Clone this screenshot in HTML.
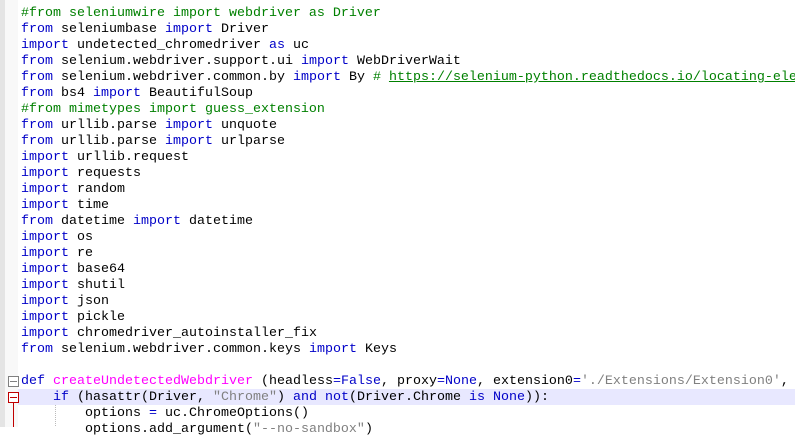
<!DOCTYPE html><html><head><style>
body{margin:0;width:795px;height:427px;overflow:hidden;background:#fff;position:relative;font-family:"Liberation Mono","Courier New",monospace;font-size:13.33px}
.g{position:absolute;left:0;top:0;width:5px;height:427px;background:#e4e4e4}
.f{position:absolute;left:5px;top:0;width:13px;height:427px;background:#f8f8f8}
.l{position:absolute;left:21px;right:0;overflow:hidden;height:16px;line-height:16px;white-space:pre;color:#000}
.k{color:#0000c8}.c{color:#008000}.s{color:#808080}.m{color:#ff00ff}
.u{color:#008000;text-decoration:underline}
.hl{position:absolute;left:18px;right:0;top:389px;height:16px;background:#e8e8ff}
</style></head><body>
<div class="g"></div><div class="f"></div>
<div class="hl"></div>
<div class="l" style="top:6px"><span class="c">#from seleniumwire import webdriver as Driver</span></div>
<div class="l" style="top:22px"><span class="k">from</span> seleniumbase <span class="k">import</span> Driver</div>
<div class="l" style="top:38px"><span class="k">import</span> undetected_chromedriver <span class="k">as</span> uc</div>
<div class="l" style="top:54px"><span class="k">from</span> selenium.webdriver.support.ui <span class="k">import</span> WebDriverWait</div>
<div class="l" style="top:70px"><span class="k">from</span> selenium.webdriver.common.by <span class="k">import</span> By <span class="c"># </span><span class="u">https://selenium-python.readthedocs.io/locating-elements.html</span></div>
<div class="l" style="top:86px"><span class="k">from</span> bs4 <span class="k">import</span> BeautifulSoup</div>
<div class="l" style="top:102px"><span class="c">#from mimetypes import guess_extension</span></div>
<div class="l" style="top:118px"><span class="k">from</span> urllib.parse <span class="k">import</span> unquote</div>
<div class="l" style="top:134px"><span class="k">from</span> urllib.parse <span class="k">import</span> urlparse</div>
<div class="l" style="top:150px"><span class="k">import</span> urllib.request</div>
<div class="l" style="top:166px"><span class="k">import</span> requests</div>
<div class="l" style="top:182px"><span class="k">import</span> random</div>
<div class="l" style="top:198px"><span class="k">import</span> time</div>
<div class="l" style="top:214px"><span class="k">from</span> datetime <span class="k">import</span> datetime</div>
<div class="l" style="top:230px"><span class="k">import</span> os</div>
<div class="l" style="top:246px"><span class="k">import</span> re</div>
<div class="l" style="top:262px"><span class="k">import</span> base64</div>
<div class="l" style="top:278px"><span class="k">import</span> shutil</div>
<div class="l" style="top:294px"><span class="k">import</span> json</div>
<div class="l" style="top:310px"><span class="k">import</span> pickle</div>
<div class="l" style="top:326px"><span class="k">import</span> chromedriver_autoinstaller_fix</div>
<div class="l" style="top:342px"><span class="k">from</span> selenium.webdriver.common.keys <span class="k">import</span> Keys</div>
<div class="l" style="top:374px"><span class="k">def</span> <span class="m">createUndetectedWebdriver</span> (headless<span class="k">=False</span>, proxy<span class="k">=None</span>, extension0<span class="k">=</span><span class="s">'./Extensions/Extension0'</span>, </div>
<div class="l" style="top:390px">    <span class="k">if</span> (hasattr(Driver, <span class="s">"Chrome"</span>) <span class="k">and</span> <span class="k">not</span>(Driver.Chrome <span class="k">is</span> <span class="k">None</span>)):</div>
<div class="l" style="top:406px">        options <span class="k">=</span> uc.ChromeOptions()</div>
<div class="l" style="top:422px">        options.add_argument(<span class="s">"--no-sandbox"</span>)</div>
<svg style="position:absolute;left:0;top:0" width="60" height="427">
<rect x="8.5" y="376.5" width="10" height="10" fill="#fff" stroke="#808080"/><line x1="10" y1="381.5" x2="17" y2="381.5" stroke="#808080"/>
<rect x="8.5" y="392.5" width="10" height="10" fill="#fff" stroke="#c00000"/><line x1="10" y1="397.5" x2="17" y2="397.5" stroke="#c00000"/>
<line x1="13.5" y1="403" x2="13.5" y2="427" stroke="#c00000"/>
<line x1="55.5" y1="405" x2="55.5" y2="427" stroke="#bbb" stroke-dasharray="1,1"/>
</svg>
</body></html>
